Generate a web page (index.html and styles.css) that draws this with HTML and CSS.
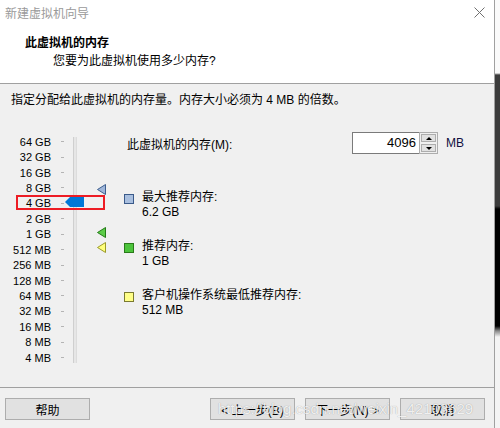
FILE: index.html
```html
<!DOCTYPE html>
<html>
  <head>
    <meta charset="utf8" />
    <title> 新建虚拟机向导 </title>
    <link rel="stylesheet" href="styles.css">
  </head>
  <body>
    <div class="dialog">
      <div class="titlebar">
        <span class="caption">新建虚拟机向导</span>
        <svg class="close" width="11" height="11" viewBox="0 0 11 11">
          <path d="M0.5,0.5 L10.5,10.5 M10.5,0.5 L0.5,10.5" />
        </svg>
      </div>
      <div class="header">
        <h1>此虚拟机的内存</h1>
        <p>您要为此虚拟机使用多少内存?</p>
      </div>
      <div class="main">
        <p class="intro">指定分配给此虚拟机的内存量。内存大小必须为 4 MB 的倍数。</p>
        <div class="content">
          <div class="slider">
            <ul class="scale">
              <li><span>64 GB</span><i></i></li>
              <li><span>32 GB</span><i></i></li>
              <li><span>16 GB</span><i></i></li>
              <li><span>8 GB</span><i></i></li>
              <li><span>4 GB</span><i></i></li>
              <li><span>2 GB</span><i></i></li>
              <li><span>1 GB</span><i></i></li>
              <li><span>512 MB</span><i></i></li>
              <li><span>256 MB</span><i></i></li>
              <li><span>128 MB</span><i></i></li>
              <li><span>64 MB</span><i></i></li>
              <li><span>32 MB</span><i></i></li>
              <li><span>16 MB</span><i></i></li>
              <li><span>8 MB</span><i></i></li>
              <li><span>4 MB</span><i></i></li>
            </ul>
            <div class="track"></div>
            <!-- markers sit on the slider scale -->
            <svg class="mark max" width="9" height="11" viewBox="0 0 9 11">
              <polygon points="0.5,5.5 8.5,0.5 8.5,10.5" />
            </svg>
            <svg class="mark rec" width="9" height="11" viewBox="0 0 9 11">
              <polygon points="0.5,5.5 8.5,0.5 8.5,10.5" />
            </svg>
            <svg class="mark min" width="9" height="11" viewBox="0 0 9 11">
              <polygon points="0.5,5.5 8.5,0.5 8.5,10.5" />
            </svg>
            <svg class="thumb" width="19" height="10" viewBox="0 0 19 10">
              <polygon points="0,5 5,0 19,0 19,10 5,10" />
            </svg>
            <div class="highlight"></div>
          </div>
          <div class="details">
            <div class="memory">
              <span class="label">此虚拟机的内存(M):</span>
              <div class="spin">
                <span class="value">4096</span>
                <div class="arrows">
                  <span class="up"></span>
                  <span class="down"></span>
                </div>
              </div>
              <span class="unit">MB</span>
            </div>
            <div class="legend">
              <span class="swatch max"></span>
              <div>最大推荐内存:<br>6.2 GB</div>
            </div>
            <div class="legend">
              <span class="swatch rec"></span>
              <div>推荐内存:<br>1 GB</div>
            </div>
            <div class="legend">
              <span class="swatch min"></span>
              <div>客户机操作系统最低推荐内存:<br>512 MB</div>
            </div>
          </div>
        </div>
      </div>
      <div class="footer">
        <button>帮助</button>
        <span class="spacer"></span>
        <button>&lt; 上一步(B)</button>
        <button>下一步(N) &gt;</button>
        <button>取消</button>
        <span class="watermark">https://blog.csdn.net/weixin_42103629</span>
      </div>
    </div>
    <div class="edge"></div>
  </body>
</html>
```

FILE: styles.css
```css
body {
  margin: 0;
  width: 500px;
  height: 428px;
  display: flex;
  overflow: hidden;
  font-family: "Liberation Sans", "Noto Sans CJK SC", sans-serif;
  font-size: 12px;
  color: #000;
}

.dialog {
  width: 494px;
  border-right: 1px solid #a0a0a0;
  background: #f0f0f0;
  display: flex;
  flex-direction: column;
}

.edge {
  flex: 1;
  background: linear-gradient(to bottom, #fafafa 0, #fafafa 73px, #3c3c3c 75px, #3c3c3c 206px, #000 209px, #000 326px, #8a8a8a 331px, #f4f4f4 337px);
}

.titlebar {
  height: 24px;
  background: #fff;
  display: flex;
  justify-content: space-between;
  align-items: center;
  padding: 0 9px 0 5px;
}
.caption {
  color: #9a9a9a;
}
.close path {
  stroke: #707070;
  stroke-width: 1;
  fill: none;
}

.header {
  height: 59px;
  background: #fff;
  border-bottom: 1px solid #a0a0a0;
  box-sizing: border-box;
  height: 60px;
  padding: 11px 0 0 25px;
}
.header h1 {
  margin: 0;
  font-size: 12px;
  line-height: 16px;
  font-weight: bold;
}
.header p {
  margin: 2px 0 0 28px;
  line-height: 16px;
}

.main {
  flex: 1;
  padding: 8px 0 0 11px;
}
.intro {
  margin: 0;
  line-height: 16px;
}

.content {
  display: flex;
  margin-top: 24px;
}

.slider {
  position: relative;
  width: 99px;
  padding-top: 2px;
  display: flex;
  align-items: flex-start;
}
.scale {
  list-style: none;
  margin: 0;
  padding: 0;
}
.scale li {
  display: flex;
  align-items: center;
  height: 15.43px;
  font-size: 11px;
}
.scale span {
  width: 40px;
  text-align: right;
}
.scale i {
  width: 3px;
  height: 1px;
  margin-left: 10px;
  background: #b4b4b4;
}
.track {
  width: 2px;
  height: 226px;
  margin: 3px 0 0 9px;
  background: #e6e6e6;
  border-left: 1px solid #cfcfcf;
  border-right: 1px solid #dcdcdc;
}

.mark {
  position: absolute;
  left: 86px;
}
.mark polygon {
  stroke-width: 1;
}
.mark.max {
  top: 52px;
}
.mark.max polygon {
  fill: #9fb6da;
  stroke: #3d5e8e;
}
.mark.rec {
  top: 95px;
}
.mark.rec polygon {
  fill: #5ccc48;
  stroke: #237a17;
}
.mark.min {
  top: 110px;
}
.mark.min polygon {
  fill: #ffff7a;
  stroke: #9a9a2a;
}
.thumb {
  position: absolute;
  left: 54px;
  top: 65px;
}
.thumb polygon {
  fill: #0078d7;
}
.highlight {
  position: absolute;
  left: 5px;
  top: 63px;
  width: 89px;
  height: 15px;
  box-sizing: border-box;
  border: 2px solid #ed1c24;
}

.details {
  flex: 1;
}
.memory {
  display: flex;
  align-items: center;
  height: 22px;
  padding-left: 17px;
}
.memory .label {
  width: 225px;
}
.spin {
  display: flex;
  height: 22px;
  box-sizing: border-box;
  border: 1px solid #7a7a7a;
  background: #fff;
}
.spin .value {
  width: 63px;
  text-align: right;
  padding-right: 3px;
  line-height: 20px;
  font-size: 13px;
}
.arrows {
  display: flex;
  flex-direction: column;
  width: 17px;
  margin: -1px -1px -1px 0;
  border: 1px solid #adadad;
  background: #f0f0f0;
}
.arrows span {
  flex: 1;
  margin: 1px;
  border: 1px solid #adadad;
  background: #e1e1e1;
  display: flex;
  align-items: center;
  justify-content: center;
}
.arrows span::after {
  content: "";
  border-left: 3px solid transparent;
  border-right: 3px solid transparent;
}
.arrows .up::after {
  border-bottom: 3px solid #000;
}
.arrows .down::after {
  border-top: 3px solid #000;
}
.unit {
  margin-left: 8px;
  color: #101040;
}

.legend {
  display: flex;
  align-items: flex-start;
  margin: 36px 0 0 14px;
  line-height: 15px;
}
.legend + .legend {
  margin-top: 19px;
}
.swatch {
  width: 10px;
  height: 10px;
  box-sizing: border-box;
  margin: 4px 8px 0 0;
  border: 1px solid;
}
.swatch.max {
  background: #a9bfdf;
  border-color: #3a5a8a;
}
.swatch.rec {
  background: #4cc43c;
  border-color: #2a7a1a;
}
.swatch.min {
  background: #ffff88;
  border-color: #7a7a30;
}

.footer {
  position: relative;
  height: 41px;
  box-sizing: border-box;
  border-top: 1px solid #a0a0a0;
  padding: 10px 9px 0 5px;
  display: flex;
  align-items: flex-start;
  gap: 10px;
}
.footer button {
  width: 85px;
  height: 22px;
  border: 1px solid #adadad;
  background: #e1e1e1;
  font-family: "Liberation Sans", "Noto Sans CJK SC", sans-serif;
  font-size: 12px;
  color: #000;
  padding: 0;
}
.spacer {
  flex: 1;
}
.watermark {
  position: absolute;
  left: 218px;
  top: 12px;
  font-size: 15px;
  line-height: 18px;
  color: rgba(255, 255, 255, 0.85);
  text-shadow: 0 0 1px rgba(0, 0, 0, 0.35);
  white-space: nowrap;
}
```
